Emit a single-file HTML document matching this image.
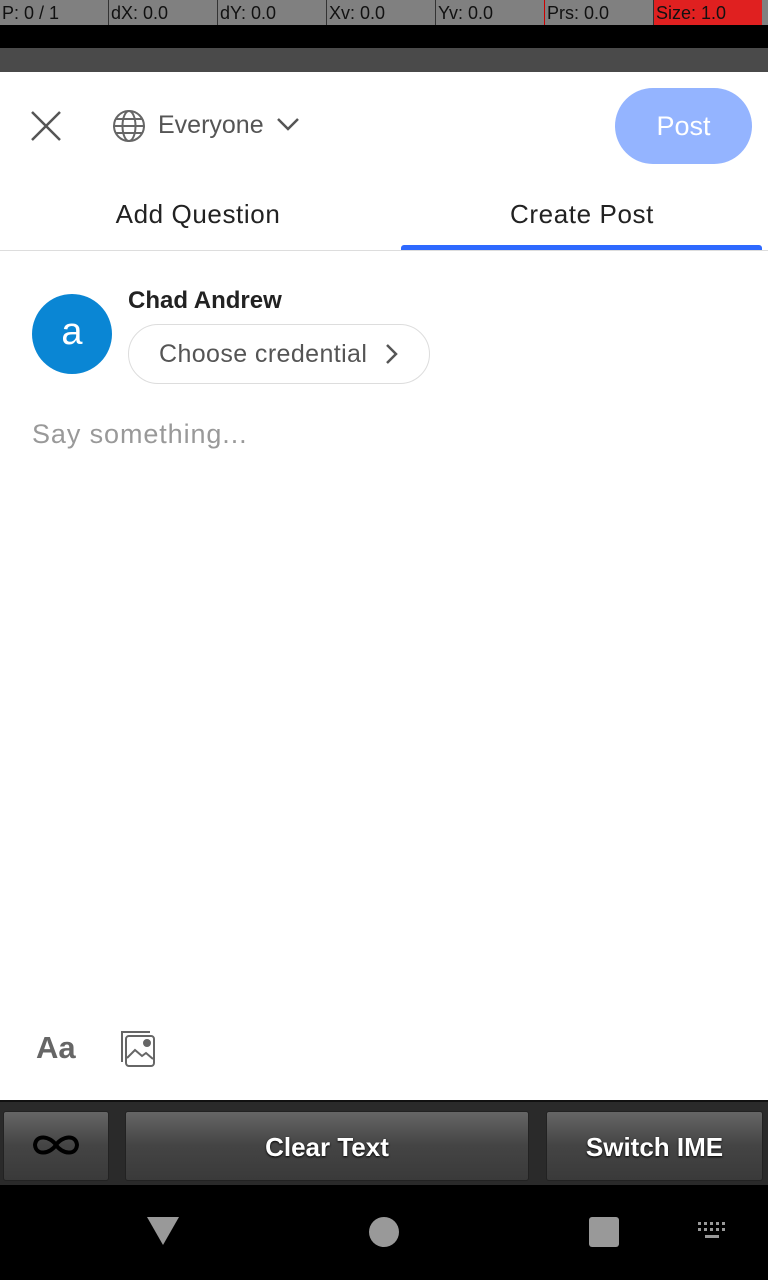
<!DOCTYPE html>
<html><head><style>
*{margin:0;padding:0;box-sizing:border-box}
body{width:768px;height:1280px;position:relative;font-family:"Liberation Sans",sans-serif;background:#fff;overflow:hidden}
.a{position:absolute}
.cell{position:absolute;top:0;height:25px;background:#808080;font-size:18px;color:#111;padding-left:2px;line-height:26px;border-right:1px solid #333}
.btn{position:absolute;top:1111px;height:70px;border-radius:3px;background:linear-gradient(#666,#444 50%,#3a3a3a);border:1px solid #222;color:#fff;font-weight:bold;font-size:26px;text-align:center;line-height:70px;text-shadow:0 1px 2px #000}
</style></head><body>
<div class="cell" style="left:0;width:109px">P: 0 / 1</div>
<div class="cell" style="left:109px;width:109px">dX: 0.0</div>
<div class="cell" style="left:218px;width:109px">dY: 0.0</div>
<div class="cell" style="left:327px;width:109px">Xv: 0.0</div>
<div class="cell" style="left:436px;width:109px;border-right:1px solid #c00">Yv: 0.0</div>
<div class="cell" style="left:545px;width:109px">Prs: 0.0</div>
<div class="cell" style="left:654px;width:108px;background:#e02020;border:none">Size: 1.0</div>
<div class="a" style="left:762px;top:0;width:6px;height:25px;background:#808080"></div>
<div class="a" style="left:0;top:25px;width:768px;height:23px;background:#000"></div>
<div class="a" style="left:0;top:48px;width:768px;height:24px;background:#4a4a4a"></div>

<svg class="a" style="left:30px;top:110px" width="32" height="32"><path d="M2 2L30 30M30 2L2 30" stroke="#555" stroke-width="2.5"/></svg>
<svg class="a" style="left:112px;top:109px" width="34" height="34" fill="none" stroke="#666" stroke-width="2"><circle cx="17" cy="17" r="15"/><ellipse cx="17" cy="17" rx="6.5" ry="15"/><path d="M2 17H32M4 10H30M4 24H30"/></svg>
<div class="a" style="left:158px;top:111px;font-size:25px;color:#555">Everyone</div>
<svg class="a" style="left:276px;top:116px" width="24" height="16"><path d="M2 3L12 13L22 3" stroke="#555" stroke-width="2.5" fill="none"/></svg>
<div class="a" style="left:615px;top:88px;width:137px;height:76px;border-radius:38px;background:#94b4ff;color:#fff;font-size:27px;text-align:center;line-height:76px">Post</div>

<div class="a" style="left:0;top:199px;width:396px;text-align:center;font-size:26px;letter-spacing:0.6px;color:#222">Add Question</div>
<div class="a" style="left:400px;top:199px;width:364px;text-align:center;font-size:26px;letter-spacing:0.6px;color:#222">Create Post</div>
<div class="a" style="left:0;top:250px;width:768px;height:1px;background:#ddd"></div>
<div class="a" style="left:401px;top:245px;width:361px;height:5px;background:#2e69ff;border-radius:3px 3px 0 0"></div>

<div class="a" style="left:32px;top:294px;width:80px;height:80px;border-radius:50%;background:#0a86d4;color:#fff;font-size:38px;text-align:center;line-height:76px">a</div>
<div class="a" style="left:128px;top:287px;font-size:24px;font-weight:bold;color:#222">Chad Andrew</div>
<div class="a" style="left:128px;top:324px;width:302px;height:60px;border:1.5px solid #ddd;border-radius:30px;font-size:25px;letter-spacing:0.4px;color:#555;line-height:58px;padding-left:30px">Choose credential</div>
<svg class="a" style="left:384px;top:343px" width="16" height="22"><path d="M3 2L12 11L3 20" stroke="#555" stroke-width="2.5" fill="none"/></svg>
<div class="a" style="left:32px;top:419px;font-size:27px;letter-spacing:0.9px;color:#999">Say something...</div>

<div class="a" style="left:36px;top:1030px;font-size:31px;font-weight:bold;color:#666">Aa</div>
<svg class="a" style="left:116px;top:1028px" width="42" height="42" fill="none" stroke="#666" stroke-width="2"><path d="M6 34V4H34"/><rect x="10" y="8" width="28" height="30" rx="3"/><path d="M11 30L19 22L26 28L30 25L37 31"/><circle cx="31" cy="15" r="3" fill="#666"/></svg>

<div class="a" style="left:0;top:1100px;width:768px;height:85px;background:#2a2a2a;border-top:2px solid #111"></div>
<div class="btn" style="left:3px;width:106px"></div>
<svg class="a" style="left:30px;top:1132px" width="52" height="26"><path d="M26 13C20 4 6 2 5 13C6 24 20 22 26 13C32 4 46 2 47 13C46 24 32 22 26 13Z" stroke="#000" stroke-width="4" fill="none"/></svg>
<div class="btn" style="left:125px;width:404px">Clear Text</div>
<div class="btn" style="left:546px;width:217px">Switch IME</div>
<div class="a" style="left:0;top:1185px;width:768px;height:95px;background:#000"></div>
<svg class="a" style="left:146px;top:1216px" width="34" height="30"><path d="M1 1H33L17 29Z" fill="#999"/></svg>
<div class="a" style="left:369px;top:1217px;width:30px;height:30px;border-radius:50%;background:#999"></div>
<div class="a" style="left:589px;top:1217px;width:30px;height:30px;border-radius:3px;background:#999"></div>
<svg class="a" style="left:698px;top:1222px" width="34" height="20" fill="#999"><rect x="0" y="0" width="3" height="3"/><rect x="6" y="0" width="3" height="3"/><rect x="12" y="0" width="3" height="3"/><rect x="18" y="0" width="3" height="3"/><rect x="24" y="0" width="3" height="3"/><rect x="0" y="6" width="3" height="3"/><rect x="6" y="6" width="3" height="3"/><rect x="12" y="6" width="3" height="3"/><rect x="18" y="6" width="3" height="3"/><rect x="24" y="6" width="3" height="3"/><rect x="7" y="13" width="14" height="3"/></svg>
</body></html>
